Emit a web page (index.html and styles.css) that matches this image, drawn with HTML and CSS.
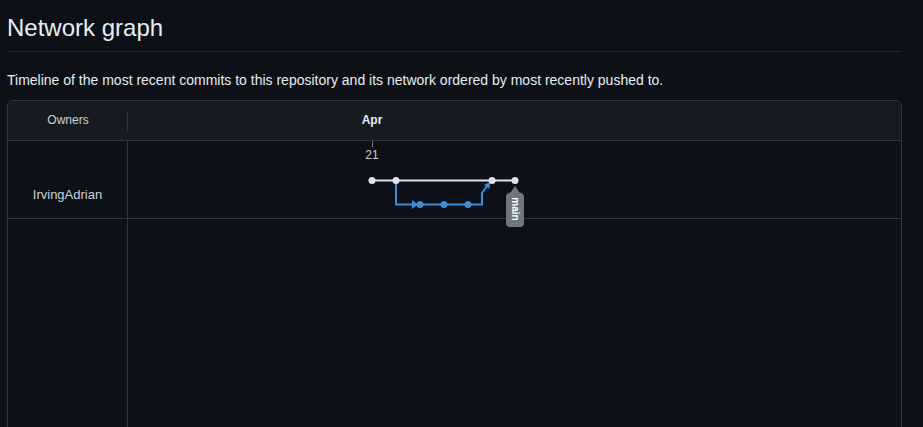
FILE: index.html
```html
<!DOCTYPE html>
<html lang="en">
<head>
<meta charset="utf-8">
<title>Network graph</title>
<link rel="stylesheet" href="styles.css">
</head>
<body>
<main class="page">
  <h2 class="subhead">Network graph</h2>
  <p class="desc">Timeline of the most recent commits to this repository and its network ordered by most recently pushed to.</p>
  <div class="network">
    <div class="net-head">
      <div class="owners-head">Owners</div>
      <div class="month-head"><span class="month">Apr</span></div>
    </div>
    <div class="net-row">
      <div class="owner">IrvingAdrian</div>
      <div class="graph">
        <svg class="graph-svg" width="774" height="77" viewBox="0 0 774 77" xmlns="http://www.w3.org/2000/svg">
          <line x1="244.5" y1="0" x2="244.5" y2="6" stroke="#6e7681" stroke-width="1"/>
          <text x="244" y="18" text-anchor="middle" class="day">21</text>
          <line x1="244" y1="39.5" x2="387" y2="39.5" stroke="#dfe3e8" stroke-width="2"/>
          <path d="M268 40 V63.5 H285" fill="none" stroke="#3b8fd9" stroke-width="2"/>
          <path d="M284 59 L290 63.5 L284 68 Z" fill="#3b8fd9"/>
          <line x1="290" y1="63.5" x2="340" y2="63.5" stroke="#3b8fd9" stroke-width="2"/>
          <path d="M340 63.5 H354 V52 L359 45" fill="none" stroke="#3b8fd9" stroke-width="2"/>
          <path d="M356 44 L362 41 L361.5 48 Z" fill="#3b8fd9"/>
          <circle cx="244" cy="39.5" r="3.5" fill="#dfe3e8"/>
          <circle cx="268" cy="39.5" r="3.5" fill="#dfe3e8"/>
          <circle cx="364" cy="39.5" r="3.5" fill="#dfe3e8"/>
          <circle cx="387" cy="39.5" r="3.5" fill="#dfe3e8"/>
          <circle cx="292" cy="63.5" r="3.5" fill="#3b8fd9"/>
          <circle cx="316" cy="63.5" r="3.5" fill="#3b8fd9"/>
          <circle cx="340" cy="63.5" r="3.5" fill="#3b8fd9"/>
          <path d="M387 45 L391.5 51.5 Q396 52 396 56 V82 Q396 86 392 86 H382 Q378 86 378 82 V56 Q378 52 382.5 51.5 Z" fill="#6e7681"/>
          <text x="387" y="68" class="branch" text-anchor="middle" transform="rotate(90 387 68)" dy="3.5">main</text>
        </svg>
      </div>
    </div>
    <div class="net-rest">
      <div class="owner-empty"></div>
      <div class="graph-empty"></div>
    </div>
  </div>
</main>
</body>
</html>
```
FILE: styles.css
```css
html, body {
  margin: 0;
  padding: 0;
  background: #0d1117;
}
body {
  color: #e6edf3;
  font-family: "Liberation Sans", Arial, sans-serif;
  overflow: hidden;
}
.page {
  display: flex;
  flex-direction: column;
  padding: 0 21px 0 7px;
}
.subhead {
  margin: 0;
  padding: 12px 0 7px;
  font-size: 24px;
  font-weight: 400;
  line-height: 32px;
  color: #e6edf3;
  border-bottom: 1px solid #21262d;
}
.desc {
  margin: 18px 0 9px;
  font-size: 14px;
  line-height: 21px;
  color: #e6edf3;
}
.network {
  border: 1px solid #30363d;
  border-radius: 6px;
  overflow: hidden;
  display: flex;
  flex-direction: column;
  font-family: "Liberation Sans", Arial, sans-serif;
  font-size: 12px;
}
.net-head {
  display: grid;
  grid-template-columns: 120px 1fr;
  height: 39px;
  background: #161b22;
  border-bottom: 1px solid #30363d;
}
.owners-head {
  display: flex;
  align-items: center;
  justify-content: center;
  padding-bottom: 2px;
  box-sizing: border-box;
  color: #c9d1d9;
  position: relative;
}
.owners-head::after {
  content: "";
  position: absolute;
  right: 0;
  top: 10px;
  bottom: 8px;
  width: 1px;
  background: #30363d;
}
.month-head {
  position: relative;
}
.month {
  position: absolute;
  left: 244px;
  top: 12px;
  transform: translateX(-50%);
  font-weight: 700;
  color: #e6edf3;
}
.net-row {
  display: grid;
  grid-template-columns: 120px 1fr;
  height: 77px;
  border-bottom: 1px solid #30363d;
}
.owner {
  display: flex;
  align-items: center;
  justify-content: center;
  padding-top: 29px;
  box-sizing: border-box;
  border-right: 1px solid #30363d;
  color: #c9d1d9;
  font-size: 13px;
}
.graph {
  position: relative;
}
.graph-svg {
  display: block;
  overflow: visible;
  position: relative;
  z-index: 1;
}
.day {
  font-family: "Liberation Sans", Arial, sans-serif;
  font-size: 12px;
  fill: #c9d1d9;
}
.branch {
  font-family: "Liberation Sans", Arial, sans-serif;
  font-size: 10px;
  font-weight: 700;
  fill: #ffffff;
}
.net-rest {
  display: grid;
  grid-template-columns: 120px 1fr;
  height: 320px;
}
.owner-empty {
  border-right: 1px solid #30363d;
}
```
